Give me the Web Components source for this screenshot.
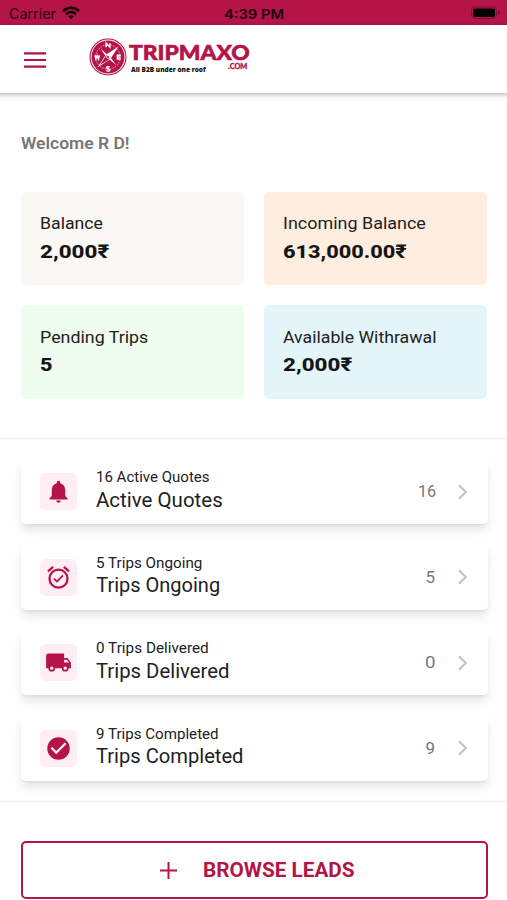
<!DOCTYPE html>
<html lang="en">
<head>
<meta charset="utf-8">
<title>Tripmaxo</title>
<style>
html,body{margin:0;padding:0;background:#fefefe;font-family:Roboto,"Noto Sans",sans-serif;color:#212121}
body{height:900px;overflow:hidden}
</style>
</head>
<body>
<trip-app></trip-app>
<script>
const define = (name, html, setup) => customElements.define(name, class extends HTMLElement {
  connectedCallback() {
    if (this.shadowRoot) return;
    const t = document.createElement('template');
    t.innerHTML = typeof html === 'function' ? html(this) : html;
    this.attachShadow({mode: 'open'}).appendChild(t.content.cloneNode(true));
    if (setup) setup(this);
  }
});

// A single line of text whose glyphs are stretched to the width in "w".
define('fit-text', el => `<style>
:host{display:block;width:${el.getAttribute('w')}px;font-size:${el.getAttribute('size')}px;line-height:1.25;white-space:nowrap}
span{display:inline-block;vertical-align:top;transform-origin:0 0}
</style><span><slot></slot></span>`, el => {
  const s = el.shadowRoot.querySelector('span');
  s.style.transform = `scaleX(${el.getAttribute('w') / s.offsetWidth})`;
});

define('status-bar', `<style>
:host{display:grid;grid-template-columns:1fr auto 1fr;height:25px;background:#b41446;color:#2a0711;font-family:Inter,sans-serif;align-items:center}
.l{display:flex;align-items:center;gap:6px;padding-left:9px}
.t{font-weight:600;color:#22040d}
.r{display:flex;justify-content:flex-end;padding-right:6px}
fit-text{margin-top:3px}svg{display:block;margin-top:1px}
</style>
<div class="l"><fit-text w="47" size="14">Carrier</fit-text>
<svg width="18" height="14" viewBox="0 0 18 14" fill="none" stroke="#160008" stroke-width="2.7"><path d="M1 5.1C5.5.6 12.500.6 17 5.100"/><path d="M4 8.300c2.900-2.800 7.100-2.800 10 0"/><path d="M6.300 10.300L9 13.200l2.700-2.900c-1.500-1.400-3.900-1.400-5.400 0z" fill="#160008" stroke="none"/></svg></div>
<div class="t"><fit-text w="60" size="13.5">4:39 PM</fit-text></div>
<div class="r"><svg width="31" height="14" viewBox="0 0 31 14"><rect x="1.500" y="1" width="25" height="11.500" rx="3.500" fill="none" stroke="#7d0d31"/><rect x="3" y="2.500" width="22" height="8.500" rx="1.800" fill="#000"/><path d="M28 4.800v4q1.700-.6 1.700-2t-1.700-2" fill="#7d0d31"/></svg></div>`);

define('brand-logo', `<style>
:host{display:flex;gap:2px;color:#b41446;font-family:Lato,"Open Sans",sans-serif}
svg{display:block}
.w{font-weight:900;padding-top:6px}
.w fit-text{line-height:.8;-webkit-text-stroke:.6px #b41446}
.b{display:flex;justify-content:space-between;align-items:flex-start;width:118px;font-weight:900}
.b fit-text{line-height:1}
.tag{color:#111;padding:5px 0 0 2px;font-family:"Open Sans",sans-serif;font-weight:800}
.com{padding-top:2.300px;-webkit-text-stroke:.3px #b41446}
</style>
<svg width="38" height="38" viewBox="0 0 38 38"><circle cx="19" cy="19" r="18" fill="none" stroke="#b41446" stroke-width="1.100"/><circle cx="19" cy="19" r="16.500" fill="#b41446"/><circle cx="19" cy="19" r="12.200" fill="none" stroke="#fff" stroke-opacity=".75" stroke-width=".8" stroke-dasharray="1.600 1"/>
<g fill="#fff"><path d="M29.500 8.500L21.200 21.200 8.500 29.500 16.800 16.800z"/><path d="M11.500 10.500l6.500 6-1.500 1.500zM27 27l-6.500-5.500 1.500-1.500z"/></g><path d="M17.200 17.200l3.700 3.700L11 27z" fill="#b41446"/><circle cx="19" cy="19" r="1.500" fill="#b41446" stroke="#fff" stroke-width=".7"/>
<g fill="none" stroke="#fff" stroke-width="1.500"><path d="M17.200 9.300V5.200l3.700 4V5.200M6 17.200l.9 3.600 1.300-3 1.300 3 .9-3.600M31.800 17.200h-3.400v3.800h3.400M28.400 19.100h3"/><path d="M20.700 29.200c-1-.7-3.200-.7-3.200.6 0 1.500 3.300.5 3.300 2.200 0 1.300-2.500 1.300-3.500.5"/></g></svg>
<div><div class="w"><fit-text w="120.500" size="21">TRIPMAXO</fit-text></div>
<div class="b"><fit-text class="tag" w="75" size="7.200">All B2B under one roof</fit-text><fit-text class="com" w="19" size="7">.COM</fit-text></div></div>`);

define('app-header', `<style>
:host{display:flex;height:69px;background:#fff;box-sizing:border-box;border-bottom:1px solid #cbcbcb;box-shadow:0 1px 3px 1px #0000002a;padding-left:24px;position:relative}
svg{display:block;margin:26.500px 42.600px 0 0}
brand-logo{margin-top:13px}
</style><svg width="22" height="16" viewBox="0 0 22 16" stroke="#b41446" stroke-width="2.200"><path d="M0 1.400h22M0 8h22M0 14.600h22"/></svg><brand-logo></brand-logo>`);

define('stat-card', el => `<style>
:host{display:block;box-sizing:border-box;height:93.500px;border-radius:5px;background:${el.getAttribute('bg')};padding:21.800px 0 0 19.500px}
.v{font-weight:800;color:#151515;margin-top:5px}
</style><fit-text w="${el.getAttribute('lw')}" size="17">${el.getAttribute('label')}</fit-text>
<fit-text class="v" w="${el.getAttribute('vw')}" size="19"><slot></slot></fit-text>`);

const icons = {
  bell: '<path d="M12 22c1.100 0 2-.9 2-2h-4c0 1.100.9 2 2 2zm6-6v-5c0-3.070-1.630-5.640-4.500-6.320V4c0-.83-.67-1.500-1.500-1.500s-1.500.67-1.500 1.500v.68C7.640 5.360 6 7.920 6 11v5l-2 2v1h16v-1z"/>',
  alarm: '<path d="M22 5.720l-4.600-3.860-1.290 1.530 4.600 3.860zM7.880 3.390L6.600 1.860 2 5.710l1.290 1.530zM12 4a9 9 0 1 0 0 18 9 9 0 0 0 0-18zm0 16a7 7 0 1 1 0-14 7 7 0 0 1 0 14zm-1.460-5.470L8.410 12.400l-1.060 1.060 3.180 3.180 6-6-1.060-1.060z"/>',
  truck: '<path d="M20 8h-3V4H3c-1.100 0-2 .9-2 2v11h2a3 3 0 0 0 6 0h6a3 3 0 0 0 6 0h2v-5zM6 18.500a1.500 1.500 0 1 1 0-3 1.500 1.500 0 0 1 0 3zm13.500-9l1.960 2.500H17V9.500zM18 18.500a1.500 1.500 0 1 1 0-3 1.500 1.500 0 0 1 0 3z"/>',
  check: '<path d="M12 2a10 10 0 1 0 0 20 10 10 0 0 0 0-20zm-2 15l-5-5 1.410-1.410L10 14.170l7.590-7.590L19 8z"/>'
};
define('trip-row', el => `<style>
:host{display:flex;box-sizing:border-box;height:65.500px;background:#fff;border-radius:5px;box-shadow:0 7px 10px -1px #00000019,0 2px 3px -1px #00000012;padding:0 20px 0 19.500px}
.i{width:37px;height:37px;margin:14.500px 19.200px 0 0;border-radius:5px;background:#ffeef3;display:flex;align-items:center;justify-content:center;flex:none}
.x{flex:1;padding-top:10.300px}.t{margin-top:.700px}
.n{color:#777;margin:22.500px 21.500px 0 0}
.c{margin-top:25px;flex:none}
</style>
<div class="i"><svg width="27" height="27" viewBox="0 0 24 24" fill="#b41446">${icons[el.getAttribute('icon')]}</svg></div>
<div class="x"><fit-text w="${el.getAttribute('sw')}" size="14.500">${el.getAttribute('sub')}</fit-text><fit-text class="t" w="${el.getAttribute('tw')}" size="20"><slot></slot></fit-text></div>
<fit-text class="n" w="${el.getAttribute('nw')}" size="17">${el.getAttribute('count')}</fit-text>
<svg class="c" width="11" height="16" viewBox="0 0 11 16" fill="none" stroke="#c2c2c2" stroke-width="2"><path d="M2 1.300l6.800 6.700L2 14.700"/></svg>`);

define('lead-button', `<style>
:host{display:flex;box-sizing:border-box;height:58.500px;border:2px solid #b41446;border-radius:5px;color:#b41446;padding:0 0 0 136px;align-items:center;gap:25px;font-weight:700}
fit-text{padding-top:1.500px}
</style><svg width="19" height="19" viewBox="0 0 19 19" stroke="#b41446" stroke-width="2"><path d="M9.500 1v17M1 9.500h17"/></svg><fit-text w="152" size="19.500"><slot></slot></fit-text>`);

define('trip-app', `<style>
:host{display:block}
.w{color:#777;font-weight:600;padding:38.500px 0 0 20.500px}
.g{display:grid;grid-template-columns:1fr 1fr;gap:20px;padding:37.750px 20px 39.350px 20.500px}
.rows{display:flex;flex-direction:column;gap:20px;padding:20px 19px 20px 20.500px;border:solid #f2f2f2;border-width:1px 0}
lead-button{margin:39px 19.500px 0 20.500px}
</style>
<status-bar></status-bar><app-header></app-header>
<div class="w"><fit-text w="109" size="17">Welcome R D!</fit-text></div>
<div class="g">
<stat-card bg="#f9f8f4" label="Balance" lw="63.500" vw="69.500">2,000₹</stat-card>
<stat-card bg="#ffede0" label="Incoming Balance" lw="142.500" vw="123.500">613,000.00₹</stat-card>
<stat-card bg="#effcf0" label="Pending Trips" lw="108" vw="12.500">5</stat-card>
<stat-card bg="#e4f5fa" label="Available Withrawal" lw="153" vw="69.500">2,000₹</stat-card>
</div>
<div class="rows">
<trip-row icon="bell" sub="16 Active Quotes" sw="114" tw="127" count="16" nw="18">Active Quotes</trip-row>
<trip-row icon="alarm" sub="5 Trips Ongoing" sw="106" tw="124" count="5" nw="10">Trips Ongoing</trip-row>
<trip-row icon="truck" sub="0 Trips Delivered" sw="113" tw="133" count="0" nw="11">Trips Delivered</trip-row>
<trip-row icon="check" sub="9 Trips Completed" sw="123" tw="147" count="9" nw="10">Trips Completed</trip-row>
</div>
<lead-button>BROWSE LEADS</lead-button>`);
</script>
</body>
</html>
